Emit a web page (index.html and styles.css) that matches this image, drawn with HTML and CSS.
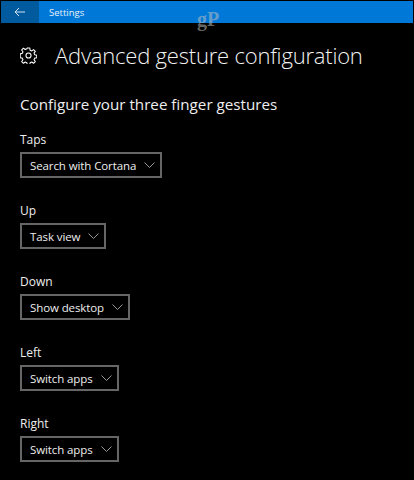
FILE: index.html
```html
<!DOCTYPE html>
<html lang="en">
<head>
<meta charset="utf-8">
<title>Settings</title>
<link rel="stylesheet" href="styles.css">
</head>
<body>
<header class="bar">
  <div class="back">
    <svg class="back-icon" width="12" height="10" viewBox="0 0 12 10"><path d="M11 5H1M5 1 1 5l4 4" fill="none" stroke="#cfe4f7" stroke-width="1"/></svg>
  </div>
  <span class="bar-title">Settings</span>
  <span class="mark">gP</span>
</header>
<main class="content">
  <div class="title-row">
    <svg class="gear" width="17" height="17" viewBox="0 0 24 24" fill="none" stroke="#fff" stroke-width="1.5" stroke-linejoin="round">
      <circle cx="12" cy="12" r="3.6"/>
      <path d="M10.2 1.5h3.6l.5 3 2.3 1 2.5-1.8 2.5 2.5-1.8 2.5 1 2.3 2.9.6v3.6l-2.9.5-1 2.3 1.8 2.5-2.5 2.5-2.5-1.8-2.3 1-.5 2.8h-3.6l-.5-2.8-2.3-1-2.5 1.8-2.5-2.5 1.8-2.5-1-2.3-2.9-.5V9.6l2.9-.6 1-2.3-1.8-2.5 2.5-2.5 2.5 1.8 2.3-1z"/>
    </svg>
    <h1 class="title">Advanced gesture configuration</h1>
  </div>
  <h2 class="heading">Configure your three finger gestures</h2>
  <section class="field">
    <div class="label">Taps</div>
    <div class="select"><span>Search with Cortana</span><svg class="chev" width="11" height="6" viewBox="0 0 11 6"><path d="M.5.5 5.5 5.5 10.5.5" fill="none" stroke="#999"/></svg></div>
  </section>
  <section class="field">
    <div class="label">Up</div>
    <div class="select"><span>Task view</span><svg class="chev" width="11" height="6" viewBox="0 0 11 6"><path d="M.5.5 5.5 5.5 10.5.5" fill="none" stroke="#999"/></svg></div>
  </section>
  <section class="field">
    <div class="label">Down</div>
    <div class="select"><span>Show desktop</span><svg class="chev" width="11" height="6" viewBox="0 0 11 6"><path d="M.5.5 5.5 5.5 10.5.5" fill="none" stroke="#999"/></svg></div>
  </section>
  <section class="field">
    <div class="label">Left</div>
    <div class="select"><span>Switch apps</span><svg class="chev" width="11" height="6" viewBox="0 0 11 6"><path d="M.5.5 5.5 5.5 10.5.5" fill="none" stroke="#999"/></svg></div>
  </section>
  <section class="field">
    <div class="label">Right</div>
    <div class="select"><span>Switch apps</span><svg class="chev" width="11" height="6" viewBox="0 0 11 6"><path d="M.5.5 5.5 5.5 10.5.5" fill="none" stroke="#999"/></svg></div>
  </section>
</main>
</body>
</html>
```
FILE: styles.css
```css
* { box-sizing: border-box; }
html, body { margin: 0; height: 480px; overflow: hidden; background: #000; }
body { padding: 1px 1px 0; color: #fff; font-family: "Open Sans", "Noto Sans", sans-serif; }
.bar { position: relative; display: flex; align-items: center; height: 22px; background: #0078d7; }
.back { display: flex; align-items: center; justify-content: center; width: 38px; height: 100%; background: #005a9e; }
.back-icon { margin-right: 1px; }
.bar-title { margin-left: 10px; font-size: 9.5px; color: #e8f2fb; }
.mark { position: absolute; left: 196px; top: 8px; font-family: "Liberation Serif", serif; font-weight: bold; font-size: 20px; line-height: 20px; color: rgba(190,190,190,.55); }
.content { padding: 0 0 0 19px; }
.title-row { display: flex; align-items: center; height: 36px; margin-top: 14px; }
.gear { flex: none; }
.title { margin: 0 0 0 18px; font-size: 22px; font-weight: 300; line-height: 36px; white-space: nowrap; color: #f2f2f2; letter-spacing: -.2px; }
.heading { margin: 20px 0 0; font-size: 15.2px; font-weight: 400; line-height: 22px; color: #eee; white-space: nowrap; }
.field { margin-top: 11px; height: 60px; }
.heading + .field { margin-top: 16px; }
.label { font-size: 12px; line-height: 17px; color: #eee; }
.select { display: inline-flex; align-items: center; gap: 8px; height: 26px; margin-top: 4px; padding: 0 5px 0 8px; border: 2px solid #666; font-size: 11.5px; letter-spacing: -.1px; color: #eee; white-space: nowrap; }
.chev { flex: none; }
```
